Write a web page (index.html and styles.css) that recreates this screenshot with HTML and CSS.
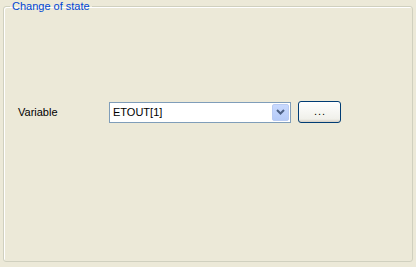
FILE: index.html
```html
<!DOCTYPE html>
<html lang="en">
<head>
  <meta charset="UTF-8">
  <title>Change of state</title>
  <link rel="stylesheet" href="styles.css">
</head>
<body>
  <div class="page">
    <fieldset class="group">
      <legend>Change of state</legend>
      <div class="row">
        <label class="label" for="variable">Variable</label>
        <div class="combo" id="variable">
          <span class="combo-value">ETOUT[1]</span>
          <span class="combo-arrow">
            <svg width="9" height="6" viewBox="0 0 9 6">
              <path d="M1 1 L4.5 4.5 L8 1" fill="none" stroke="#4d6185" stroke-width="2"/>
            </svg>
          </span>
        </div>
        <button class="browse" type="button">...</button>
      </div>
    </fieldset>
  </div>
</body>
</html>
```

FILE: styles.css
```css
* {
  box-sizing: border-box;
}

body {
  margin: 0;
  background: #ece9d8;
  font-family: 'Liberation Sans', Arial, sans-serif;
  font-size: 11px;
  color: #000;
}

.page {
  width: 416px;
  height: 267px;
  padding: 0 3px 4px 3px;
}

.group {
  margin: 0;
  height: 262px;
  width: 410px;
  border: 1px solid #d0d0bf;
  border-radius: 3px;
  box-shadow: inset 1px 1px 0 #fff;
  padding: 88px 0 0 14px;
}

.group legend {
  margin-left: -8px;
  padding: 0 2px;
  color: #0046d5;
  font-size: 11px;
  line-height: 13px;
}

.row {
  display: flex;
  align-items: center;
}

.label {
  width: 91px;
}

.combo {
  width: 182px;
  height: 21px;
  border: 1px solid #7f9db9;
  background: #fff;
  display: flex;
  align-items: center;
  justify-content: space-between;
  padding: 1px;
}

.combo-value {
  padding-left: 2px;
}

.combo-arrow {
  width: 17px;
  height: 17px;
  background: linear-gradient(#c8d9fe, #b6cbf8);
  border: 1px solid #b9cbf3;
  border-radius: 2px;
  display: flex;
  align-items: center;
  justify-content: center;
}

.browse {
  margin-left: 7px;
  width: 43px;
  height: 22px;
  border: 1px solid #003c74;
  border-radius: 3px;
  background: linear-gradient(#fff, #f0f0ea 85%, #d6d0c5);
  font-family: 'Liberation Sans', Arial, sans-serif;
  font-size: 11px;
  letter-spacing: 1px;
  padding: 0 0 3px 1px;
  color: #000;
}
```
